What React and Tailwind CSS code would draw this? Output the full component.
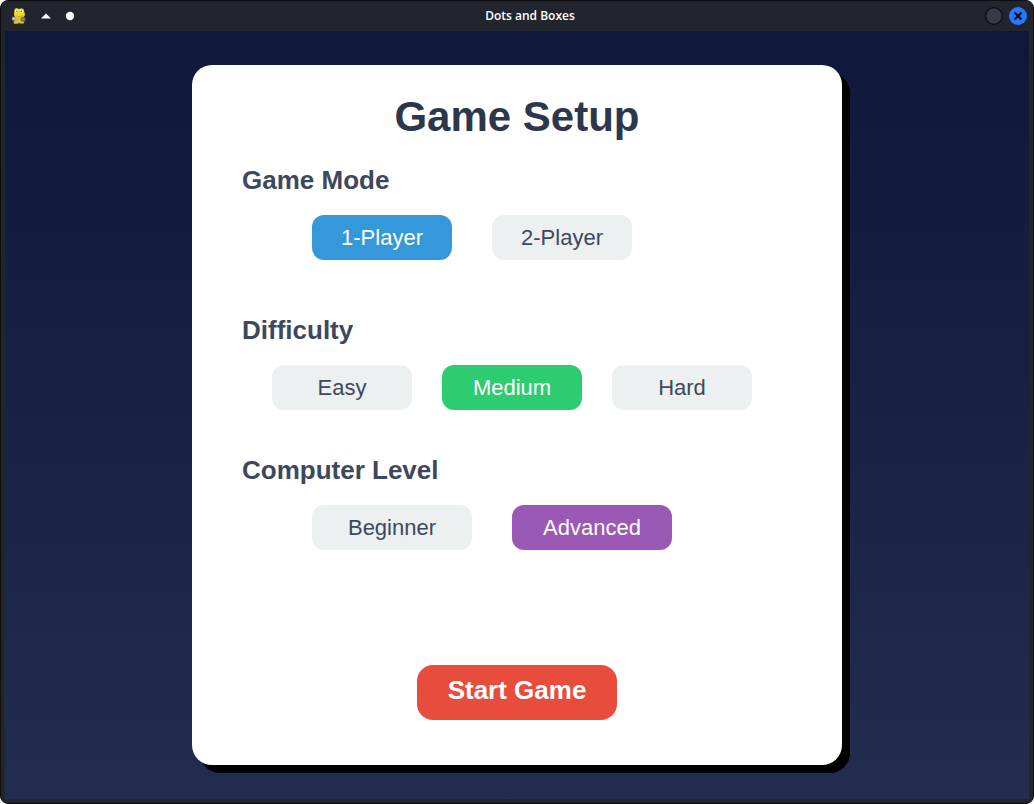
import { useState } from "react";

function MascotIcon() {
  return (
    <svg width="16" height="18" viewBox="0 0 16 18" aria-hidden="true">
      <path d="M4 9h8.500l1 4-.8 3.500H9.500L8 16l-1.500.8H3L2.500 15l1.500-2z" fill="#e3c510" />
      <path d="M3.500 2.500C4.500 1 6.500 1 8 2c1.500-1 4-.8 4.800.7L14 7.500c0 2-2 3.200-5.500 3.200S3 9.500 3 7.500z" fill="#f2d715" />
      <circle cx="5.500" cy="4" r="1.800" fill="#fff9dc" />
      <circle cx="10.500" cy="4" r="1.800" fill="#fff9dc" />
      <circle cx="5.900" cy="4.200" r=".8" fill="#6d661f" />
      <circle cx="10.300" cy="4.200" r=".8" fill="#6d661f" />
      <path d="M5 8.800c2 .9 5 .9 7 0" stroke="#b79d12" strokeWidth=".7" fill="none" />
      <circle cx="2.800" cy="11.700" r="2.100" fill="#a5a2a0" />
      <circle cx="2.800" cy="11.700" r=".8" fill="#eceae6" />
      <path d="M4.500 12.200 8 12.800l2-.8" stroke="#bcb9b5" strokeWidth="1.800" fill="none" />
      <circle cx="12" cy="12.300" r="2.500" fill="#76696a" />
      <circle cx="11.700" cy="12.300" r=".9" fill="#a3918b" />
    </svg>
  );
}

function TitleBar() {
  return (
    <header className="flex h-[30px] items-center bg-[#23252e]">
      <div className="flex items-center pl-1.5">
        <MascotIcon />
        <button type="button" aria-label="Keep above" className="ml-3.5">
          <svg width="10" height="6" viewBox="0 0 10 6" aria-hidden="true">
            <path d="M0 5.500 5 .5l5 5z" fill="#fff" />
          </svg>
        </button>
        <button type="button" aria-label="Pin window" className="ml-3.5">
          <svg width="10" height="10" viewBox="0 0 10 10" aria-hidden="true">
            <circle cx="5" cy="5" r="4.200" fill="#fff" />
          </svg>
        </button>
      </div>
      <div className="flex-1 text-center font-['Open_Sans','Noto_Sans',sans-serif] text-[12px] leading-4 font-semibold text-white">
        Dots and Boxes
      </div>
      <div className="flex items-center justify-end gap-1.5 pr-0.5">
        <button type="button" aria-label="Minimize">
          <svg width="18" height="18" viewBox="0 0 18 18" aria-hidden="true">
            <circle cx="9" cy="9" r="8.300" fill="#383b47" stroke="#0c0d10" strokeWidth="1.300" />
          </svg>
        </button>
        <button type="button" aria-label="Close">
          <svg width="18" height="18" viewBox="0 0 18 18" aria-hidden="true">
            <circle cx="9" cy="9" r="9" fill="#2777ff" />
            <path d="m5.500 5.500 7 7m0-7-7 7" stroke="#0b1020" strokeWidth="2.200" />
          </svg>
        </button>
      </div>
    </header>
  );
}

function OptionGroup({ title, options, value, onChange, activeClass, rowClass, buttonClass }) {
  return (
    <section aria-label={title}>
      <h2 className="text-[26px] leading-[30px] font-bold text-[#3d485d]">{title}</h2>
      <div className={`mt-5 flex ${rowClass}`}>
        {options.map((option) => (
          <button
            key={option}
            type="button"
            aria-pressed={option === value}
            onClick={() => onChange(option)}
            className={`h-[45px] rounded-xl text-[22px] leading-6 ${buttonClass} ${
              option === value ? activeClass : "bg-[#ecf0f1] text-[#3d485d]"
            }`}
          >
            {option}
          </button>
        ))}
      </div>
    </section>
  );
}

export default function App() {
  const [mode, setMode] = useState("1-Player");
  const [difficulty, setDifficulty] = useState("Medium");
  const [level, setLevel] = useState("Advanced");

  return (
    <div className="bg-white">
      <div className="flex min-h-screen flex-col overflow-hidden rounded-lg border border-[#0d0e11] bg-[#23252e] px-1 pb-1">
        <TitleBar />
        <main className="flex flex-1 items-center justify-center bg-linear-to-b from-[#0f173a] to-[#232d50] font-['Liberation_Sans',Arial,sans-serif]">
          <div className="w-full max-w-[650px] rounded-[20px] bg-white px-[50px] pt-7 pb-[45px] shadow-[8px_8px_0_#000]">
            <h1 className="mb-6 text-center text-[42px] leading-[48px] font-bold text-[#2c374c]">Game Setup</h1>
            <OptionGroup
              title="Game Mode"
              options={["1-Player", "2-Player"]}
              value={mode}
              onChange={setMode}
              activeClass="bg-[#3498db] text-white"
              rowClass="gap-10 pl-[70px]"
              buttonClass="w-[140px]"
            />
            <div className="mt-[55px]">
              <OptionGroup
                title="Difficulty"
                options={["Easy", "Medium", "Hard"]}
                value={difficulty}
                onChange={setDifficulty}
                activeClass="bg-[#2ecc71] text-white"
                rowClass="gap-[30px] pl-[30px]"
                buttonClass="w-[140px]"
              />
            </div>
            <div className="mt-[45px]">
              <OptionGroup
                title="Computer Level"
                options={["Beginner", "Advanced"]}
                value={level}
                onChange={setLevel}
                activeClass="bg-[#9b59b6] text-white"
                rowClass="gap-10 pl-[70px]"
                buttonClass="w-40"
              />
            </div>
            <div className="mt-[115px] flex justify-center">
              <button
                type="button"
                className="h-[55px] w-[200px] rounded-2xl bg-[#e74c3c] pb-1.5 text-[26px] leading-[30px] font-bold text-white"
              >
                Start Game
              </button>
            </div>
          </div>
        </main>
      </div>
    </div>
  );
}
